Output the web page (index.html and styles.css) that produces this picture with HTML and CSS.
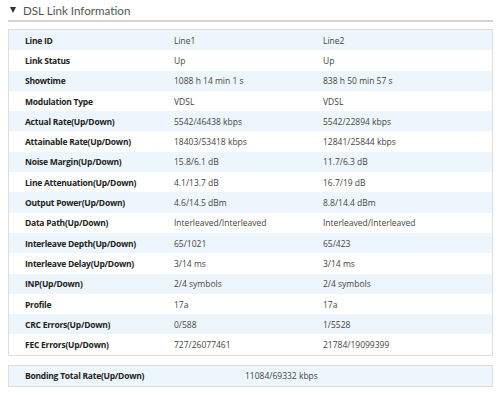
FILE: index.html
```html
<!DOCTYPE html>
<html>
<head>
<meta charset="utf-8">
<link rel="stylesheet" href="styles.css">
</head>
<body>
<div class="page">
  <div class="header">
    <span class="caret"></span>
    <span class="title">DSL Link Information</span>
  </div>
  <div class="box">
    <div class="row"><span class="lbl">Line ID</span><span>Line1</span><span>Line2</span></div>
    <div class="row"><span class="lbl">Link Status</span><span>Up</span><span>Up</span></div>
    <div class="row"><span class="lbl">Showtime</span><span>1088 h 14 min 1 s</span><span>838 h 50 min 57 s</span></div>
    <div class="row"><span class="lbl">Modulation Type</span><span>VDSL</span><span>VDSL</span></div>
    <div class="row"><span class="lbl">Actual Rate(Up/Down)</span><span>5542/46438 kbps</span><span>5542/22894 kbps</span></div>
    <div class="row"><span class="lbl">Attainable Rate(Up/Down)</span><span>18403/53418 kbps</span><span>12841/25844 kbps</span></div>
    <div class="row"><span class="lbl">Noise Margin(Up/Down)</span><span>15.8/6.1 dB</span><span>11.7/6.3 dB</span></div>
    <div class="row"><span class="lbl">Line Attenuation(Up/Down)</span><span>4.1/13.7 dB</span><span>16.7/19 dB</span></div>
    <div class="row"><span class="lbl">Output Power(Up/Down)</span><span>4.6/14.5 dBm</span><span>8.8/14.4 dBm</span></div>
    <div class="row"><span class="lbl">Data Path(Up/Down)</span><span>Interleaved/Interleaved</span><span>Interleaved/Interleaved</span></div>
    <div class="row"><span class="lbl">Interleave Depth(Up/Down)</span><span>65/1021</span><span>65/423</span></div>
    <div class="row"><span class="lbl">Interleave Delay(Up/Down)</span><span>3/14 ms</span><span>3/14 ms</span></div>
    <div class="row"><span class="lbl">INP(Up/Down)</span><span>2/4 symbols</span><span>2/4 symbols</span></div>
    <div class="row"><span class="lbl">Profile</span><span>17a</span><span>17a</span></div>
    <div class="row"><span class="lbl">CRC Errors(Up/Down)</span><span>0/588</span><span>1/5528</span></div>
    <div class="row"><span class="lbl">FEC Errors(Up/Down)</span><span>727/26077461</span><span>21784/19099399</span></div>
  </div>
  <div class="box total">
    <div class="row"><span class="lbl">Bonding Total Rate(Up/Down)</span><span>11084/69332 kbps</span></div>
  </div>
</div>
</body>
</html>
```

FILE: styles.css
```css
html, body {
  margin: 0;
  padding: 0;
  background: #fff;
}
.page {
  padding: 0 7px 0 8px;
  font-family: "Open Sans", "Noto Sans", sans-serif;
}
.header {
  display: flex;
  align-items: center;
  height: 20px;
  gap: 7px;
  padding-left: 2px;
  border-bottom: 2px solid #d4d4d4;
}
.caret {
  width: 0;
  height: 0;
  border-left: 3.5px solid transparent;
  border-right: 3.5px solid transparent;
  border-top: 6px solid #333;
}
.title {
  font-family: "Lato", "Open Sans", sans-serif;
  font-size: 11.6px;
  color: #555;
}
.box {
  margin-top: 7px;
  border: 1px solid #dedede;
}
.row {
  display: grid;
  grid-template-columns: 149px 149px 1fr;
  align-items: center;
  height: 20.3px;
  padding-left: 16px;
  font-size: 8.5px;
  color: #444;
}
.row:nth-child(odd) {
  background: #eef6fd;
}
.lbl {
  font-weight: bold;
  color: #222;
  letter-spacing: -0.25px;
}
.total {
  margin-top: 9px;
}
.total .row {
  grid-template-columns: 220px 1fr;
  height: 20px;
}
```
